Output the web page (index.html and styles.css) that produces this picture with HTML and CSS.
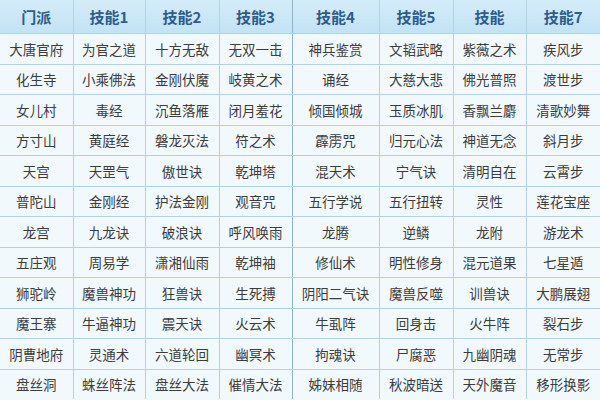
FILE: index.html
```html
<!DOCTYPE html>
<html lang="zh">
<head>
<meta charset="utf-8">
<link rel="stylesheet" href="styles.css">
</head>
<body>
<table class="skills">
<colgroup>
<col class="c73"><col class="c72"><col class="c74"><col class="c73"><col class="c87"><col class="c74"><col class="c73"><col class="c74">
</colgroup>
<thead>
<tr><th>门派</th><th>技能1</th><th>技能2</th><th class="sep">技能3</th><th>技能4</th><th>技能5</th><th>技能</th><th>技能7</th></tr>
</thead>
<tbody>
<tr><td>大唐官府</td><td>为官之道</td><td>十方无敌</td><td class="sep">无双一击</td><td>神兵鉴赏</td><td>文韬武略</td><td>紫薇之术</td><td>疾风步</td></tr>
<tr><td>化生寺</td><td>小乘佛法</td><td>金刚伏魔</td><td class="sep">岐黄之术</td><td>诵经</td><td>大慈大悲</td><td>佛光普照</td><td>渡世步</td></tr>
<tr><td>女儿村</td><td>毒经</td><td>沉鱼落雁</td><td class="sep">闭月羞花</td><td>倾国倾城</td><td>玉质冰肌</td><td>香飘兰麝</td><td>清歌妙舞</td></tr>
<tr><td>方寸山</td><td>黄庭经</td><td>磐龙灭法</td><td class="sep">符之术</td><td>霹雳咒</td><td>归元心法</td><td>神道无念</td><td>斜月步</td></tr>
<tr><td>天宫</td><td>天罡气</td><td>傲世诀</td><td class="sep">乾坤塔</td><td>混天术</td><td>宁气诀</td><td>清明自在</td><td>云霄步</td></tr>
<tr><td>普陀山</td><td>金刚经</td><td>护法金刚</td><td class="sep">观音咒</td><td>五行学说</td><td>五行扭转</td><td>灵性</td><td>莲花宝座</td></tr>
<tr><td>龙宫</td><td>九龙诀</td><td>破浪诀</td><td class="sep">呼风唤雨</td><td>龙腾</td><td>逆鳞</td><td>龙附</td><td>游龙术</td></tr>
<tr><td>五庄观</td><td>周易学</td><td>潇湘仙雨</td><td class="sep">乾坤袖</td><td>修仙术</td><td>明性修身</td><td>混元道果</td><td>七星遁</td></tr>
<tr><td>狮驼岭</td><td>魔兽神功</td><td>狂兽诀</td><td class="sep">生死搏</td><td>阴阳二气诀</td><td>魔兽反噬</td><td>训兽诀</td><td>大鹏展翅</td></tr>
<tr><td>魔王寨</td><td>牛逼神功</td><td>震天诀</td><td class="sep">火云术</td><td>牛虱阵</td><td>回身击</td><td>火牛阵</td><td>裂石步</td></tr>
<tr><td>阴曹地府</td><td>灵通术</td><td>六道轮回</td><td class="sep">幽冥术</td><td>拘魂诀</td><td>尸腐恶</td><td>九幽阴魂</td><td>无常步</td></tr>
<tr><td>盘丝洞</td><td>蛛丝阵法</td><td>盘丝大法</td><td class="sep">催情大法</td><td>姊妹相随</td><td>秋波暗送</td><td>天外魔音</td><td>移形换影</td></tr>
</tbody>
</table>
</body>
</html>
```
FILE: styles.css
```css
html, body {
  margin: 0;
  padding: 0;
  background: #f2f9fd;
}
.skills {
  width: 600px;
  table-layout: fixed;
  border-collapse: collapse;
  font-family: "Noto Sans CJK SC", "Noto Sans", sans-serif;
}
.c73 { width: 73px; }
.c72 { width: 72px; }
.c74 { width: 74px; }
.c87 { width: 87px; }
.skills th, .skills td {
  padding: 0;
  text-align: center;
  border: 1px solid #b3d3e5;
  white-space: nowrap;
  overflow: hidden;
}
.skills tr > :first-child { border-left: none; }
.skills tr > :last-child { border-right: none; }
.skills thead th {
  border-top: none;
  height: 33px;
  background: linear-gradient(#d4ecf9, #c2e2f4);
  color: #2d5d8c;
  font-size: 15px;
  font-weight: bold;
}
.skills tbody td {
  height: 29.5px;
  background: #f2f9fd;
  color: #3c3c3c;
  font-size: 13.5px;
}
.skills tbody tr:last-child td { border-bottom: none; }
.skills .sep { border-right-color: #8fb5cc; }
```
